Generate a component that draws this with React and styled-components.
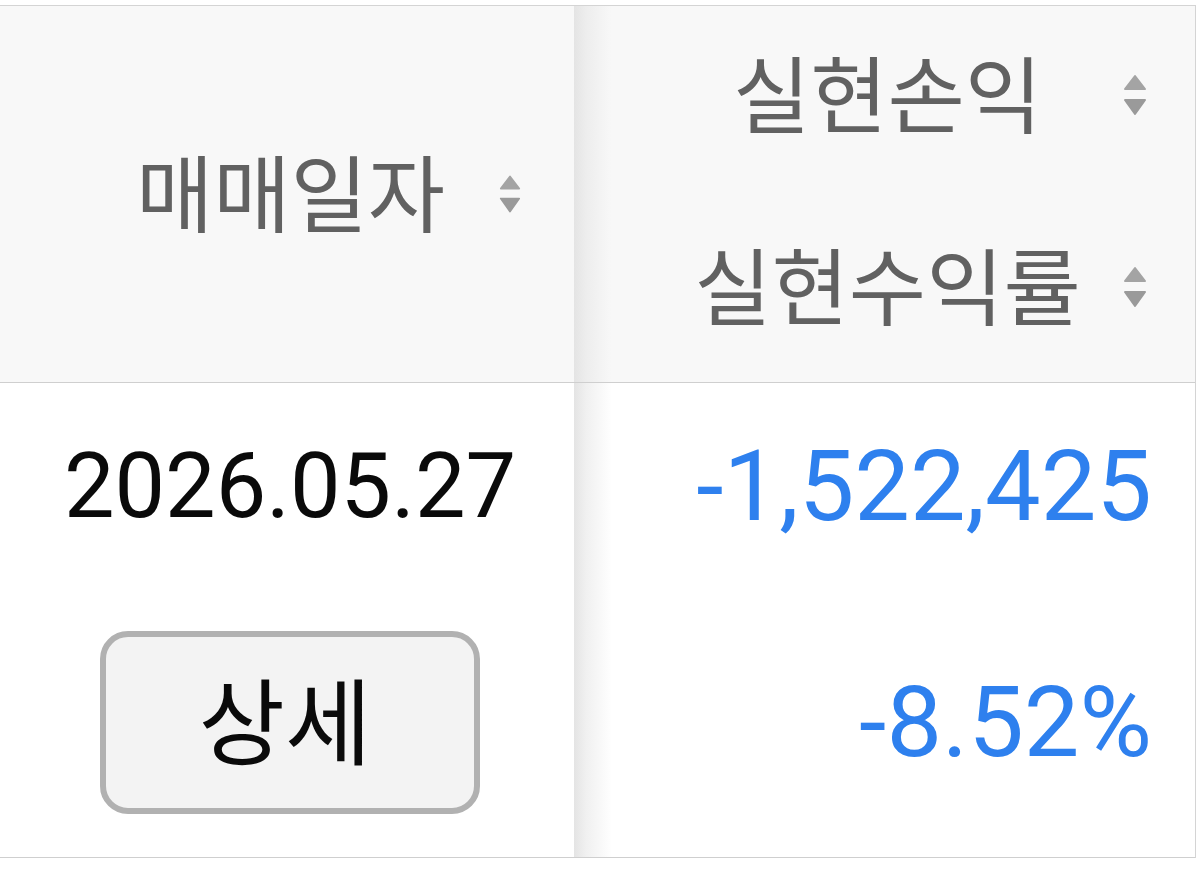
import React from "react";
import styled, { createGlobalStyle } from "styled-components";

const GlobalStyle = createGlobalStyle`
  html, body {
    margin: 0;
    padding: 0;
    background: #ffffff;
  }
  body {
    font-family: Roboto, "Noto Sans CJK KR", "Noto Sans", sans-serif;
  }
`;

const Table = styled.div`
  display: grid;
  grid-template-columns: 574px 1fr;
  grid-template-rows: 377px 475px;
  width: 1196px;
  margin-top: 5px;
  border-top: 1px solid #d4d4d4;
  border-right: 1px solid #d4d4d4;
  box-sizing: border-box;
`;

const shade = `linear-gradient(to right, #e4e4e4 0px, rgba(228,228,228,0.55) 12px, rgba(228,228,228,0) 38px)`;

const HeaderCell = styled.div`
  box-sizing: border-box;
  background: ${(p) => (p.$shaded ? `${shade}, #f8f8f8` : "#f8f8f8")};
  border-bottom: 1px solid #cfcfcf;
  display: flex;
  flex-direction: column;
  justify-content: ${(p) => (p.$stacked ? "flex-start" : "center")};
  gap: ${(p) => (p.$stacked ? "96px" : "0")};
  padding: ${(p) => (p.$stacked ? "41px 48px 0 78px" : "0 53px 0 82px")};
`;

const SortRow = styled.div`
  display: flex;
  align-items: center;
  height: 96px;
`;

const Title = styled.span`
  flex: 1;
  text-align: center;
  font-family: "Noto Sans CJK KR", sans-serif;
  font-size: 84px;
  line-height: 1;
  padding-bottom: 9px;
  color: #616161;
  white-space: nowrap;
`;

const SorterSvg = styled.svg`
  flex: none;
  width: ${(p) => p.$w}px;
  height: 42px;
`;

const Sorter = ({ w = 22 }) => (
  <SorterSvg $w={w} viewBox="0 0 24 42">
    <path
      d="M12 2 L22 15 L2 15 Z"
      fill="#a4a4a4"
      stroke="#a4a4a4"
      strokeWidth="2"
      strokeLinejoin="round"
    />
    <path
      d="M2 26 L22 26 L12 40 Z"
      fill="#9a9a9a"
      stroke="#9a9a9a"
      strokeWidth="2"
      strokeLinejoin="round"
    />
  </SorterSvg>
);

const BodyCell = styled.div`
  box-sizing: border-box;
  background: ${(p) => (p.$shaded ? `${shade}, #ffffff` : "#ffffff")};
  border-bottom: 1px solid #cfcfcf;
  display: flex;
  flex-direction: column;
  align-items: ${(p) => (p.$align === "right" ? "flex-end" : "center")};
  gap: 53px;
  padding: ${(p) => (p.$align === "right" ? "12px 43px 0 0" : "12px 0 0 6px")};
`;

const ValueRow = styled.div`
  height: 183px;
  display: flex;
  align-items: center;
`;

const DateText = styled.span`
  font-family: Roboto, sans-serif;
  font-size: 90px;
  color: #0a0a0a;
  line-height: 1.1;
`;

const Amount = styled.span`
  font-family: Roboto, sans-serif;
  font-size: 99px;
  color: #2e80ee;
  line-height: 1.1;
`;

const DetailButton = styled.button`
  box-sizing: border-box;
  width: 380px;
  height: 183px;
  border: 6px solid #b1b1b1;
  border-radius: 28px;
  background: #f3f3f3;
  color: #0a0a0a;
  font-family: "Noto Sans CJK KR", sans-serif;
  font-size: 94px;
  line-height: 1;
  padding: 0 10px 12px 0;
  cursor: pointer;
`;

export default function App() {
  return (
    <>
      <GlobalStyle />
      <Table>
        <HeaderCell>
          <SortRow>
            <Title>매매일자</Title>
            <Sorter w={22} />
          </SortRow>
        </HeaderCell>
        <HeaderCell $shaded $stacked>
          <SortRow>
            <Title>실현손익</Title>
            <Sorter w={24} />
          </SortRow>
          <SortRow>
            <Title>실현수익률</Title>
            <Sorter w={24} />
          </SortRow>
        </HeaderCell>
        <BodyCell>
          <ValueRow>
            <DateText>2026.05.27</DateText>
          </ValueRow>
          <ValueRow>
            <DetailButton type="button">상세</DetailButton>
          </ValueRow>
        </BodyCell>
        <BodyCell $shaded $align="right">
          <ValueRow>
            <Amount>-1,522,425</Amount>
          </ValueRow>
          <ValueRow>
            <Amount>-8.52%</Amount>
          </ValueRow>
        </BodyCell>
      </Table>
    </>
  );
}
